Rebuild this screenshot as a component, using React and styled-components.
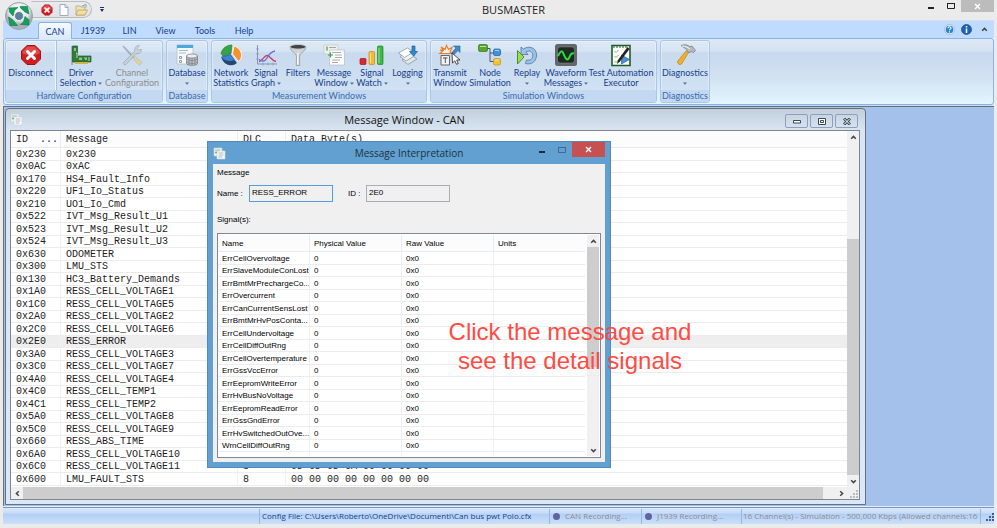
import React from "react";
import styled, { createGlobalStyle, css } from "styled-components";

const ui = `"Open Sans", "Noto Sans", sans-serif`;
const ribbonFont = `Lato, "Open Sans", sans-serif`;
const dialogFont = `"Liberation Sans", Arial, sans-serif`;
const mono = `"Liberation Mono", "Courier New", monospace`;

const GlobalStyle = createGlobalStyle`
  *, *::before, *::after { box-sizing: border-box; }
  body { margin: 0; background: #ebebeb; font-family: ${ui}; font-size: 8px; color: #000; }
  button { font: inherit; color: inherit; background: none; border: 0; padding: 0; margin: 0; }
  svg { display: block; flex: none; }
`;

const Page = styled.div`
  min-height: 100vh;
  display: flex;
  flex-direction: column;
  padding: 0 3px 4px;
  position: relative;
  overflow: hidden;
`;

/* ---------- title bar ---------- */
const TitleBar = styled.header`
  height: 20px;
  display: grid;
  grid-template-columns: 1fr auto 1fr;
  align-items: start;
`;
const AppTitle = styled.h1`
  margin: 0;
  padding-left: 30px;
  font-size: 11px;
  line-height: 20px;
  font-weight: 400;
  color: #222;
`;
const QuickArea = styled.div`
  display: flex;
  align-items: center;
  gap: 8px;
  padding: 1px 0 0 28px;
`;
const QuickBar = styled.div`
  height: 17px;
  width: 61px;
  padding-left: 9px;
  display: flex;
  align-items: center;
  gap: 6px;
  border: 1px solid #b9bcc1;
  border-left-color: transparent;
  border-radius: 0 9px 9px 0;
  background: linear-gradient(#e9ebee, #dfe2e6);
`;
const Orb = styled.button`
  position: absolute;
  z-index: 2;
  left: 4px;
  top: 1px;
`;
const WindowButtons = styled.div`
  display: flex;
  justify-content: flex-end;
`;
const WinButton = styled.button`
  width: ${(p) => (p.$close ? 33 : 20)}px;
  height: 12px;
  display: flex;
  align-items: center;
  justify-content: center;
  color: ${(p) => (p.$close ? "#fff" : "#222")};
  background: ${(p) => (p.$close ? "#bcbcbc" : "transparent")};
`;

/* ---------- ribbon ---------- */
const TabBar = styled.nav`
  height: 18px;
  background: #bfdbff;
  border-top: 1px solid #d5dfea;
  display: flex;
  align-items: stretch;
  padding-left: 35px;
  font-family: ${ribbonFont};
  font-size: 9px;
`;
const Tab = styled.button`
  width: ${(p) => p.$w}px;
  color: #15428b;
  line-height: 15px;
  margin-top: 1px;
  border: 1px solid transparent;
  border-bottom: 0;
  border-radius: 3px 3px 0 0;
  ${(p) =>
    p.$active &&
    css`
      border-color: #8db2e3;
      background: linear-gradient(#f5faff, #dbe8f7);
      margin-bottom: -1px;
      z-index: 1;
    `}
`;
const TabTools = styled.div`
  margin-left: auto;
  display: flex;
  align-items: center;
  gap: 6px;
  padding-right: 4px;
`;
const Ribbon = styled.section`
  height: 67px;
  border: 1px solid #8db2e3;
  border-radius: 3px;
  box-shadow: 0 1px 0 #bfdbff;
  background: linear-gradient(#dce8f5 0, #d5e2f2 12px, #c8d8ed 14px, #d3e3f3 40px, #e3f5ff 100%);
  display: flex;
  gap: 3px;
  padding: 1px;
  font-family: ${ribbonFont};
  font-size: 9px;
`;
const Group = styled.div`
  display: flex;
  flex-direction: column;
  height: 63px;
  border: 1px solid #a9c7e8;
  border-radius: 3px;
  box-shadow: inset 0 0 0 1px rgba(255, 255, 255, 0.35);
  overflow: hidden;
  background: linear-gradient(#dee9f6 0, #d6e4f3 10px, #c9daee 12px, #d4e4f5 100%);
`;
const GroupBody = styled.div`
  flex: 1;
  display: flex;
  padding-right: ${(p) => p.$pad || 0}px;
`;
const GroupLabel = styled.div`
  height: 12px;
  line-height: 11px;
  text-align: center;
  color: #3e6aaa;
  background: #c2d9f1;
`;
const RibbonButton = styled.button`
  width: ${(p) => p.$w}px;
  display: flex;
  flex-direction: column;
  align-items: center;
  padding-top: 3px;
  color: ${(p) => (p.$off ? "#8d8d8d" : "#15428b")};
  white-space: nowrap;
  ${(p) =>
    p.$divided &&
    css`
      border-right: 1px solid #eef5fc;
      box-shadow: 1px 0 0 #a9c2e0;
    `}
  svg.icon { width: 22px; height: 22px; margin-bottom: 2px; opacity: ${(p) => (p.$off ? 0.65 : 1)}; }
`;
const Line = styled.span`
  display: flex;
  align-items: center;
  justify-content: center;
  gap: 2px;
  height: 10px;
  line-height: 10px;
`;

/* ---------- MDI area ---------- */
const Desktop = styled.main`
  flex: 1;
  margin-top: 1px;
  border: solid #6c6f75;
  border-width: 1px 0 0 1px;
  background: #a3c1ea;
  padding: 1px 128px 1px 1px;
  position: relative;
`;
const ChildWindow = styled.section`
  border: 1px solid #66717f;
  border-radius: 4px 4px 0 0;
  background: linear-gradient(#c1cfdc 0, #d9e5f2 22px, #dbe7f4 100%);
  padding: 0 5px 4px 4px;
  display: flex;
  flex-direction: column;
`;
const ChildTitle = styled.div`
  height: 21px;
  display: grid;
  grid-template-columns: 14px 1fr 75px;
  align-items: center;
  h2 { margin: 0; font-size: 11px; line-height: 20px; font-weight: 400; text-align: center; color: #111; }
`;
const ChildButtons = styled.div`
  display: flex;
  gap: 2px;
  padding: 3px 0 0;
`;
const ChildButton = styled.button`
  width: 23px;
  height: 14px;
  border: 1px solid #8d9fbc;
  border-radius: 2px;
  display: flex;
  align-items: center;
  justify-content: center;
  color: #3b4656;
`;
const Sheet = styled.div`
  border: 1px solid #7d8794;
  background: #fff;
`;
const SheetMain = styled.div`
  display: flex;
`;
const TableClip = styled.div`
  flex: 1;
  min-width: 0;
  overflow: hidden;
  ${(p) => p.$h && css`height: ${p.$h}px;`}
`;
const DataTable = styled.table`
  width: 100%;
  table-layout: fixed;
  border-collapse: separate;
  border-spacing: 0;
  font-family: ${(p) => (p.$mono ? mono : dialogFont)};
  font-size: ${(p) => (p.$mono ? 10 : 8)}px;
  color: ${(p) => (p.$mono ? "#1c1c1c" : "#000")};
  th, td {
    padding: 0 0 0 ${(p) => (p.$mono ? 5 : 4)}px;
    text-align: left;
    font-weight: 400;
    white-space: pre;
    overflow: hidden;
    border-bottom: 1px solid #ececec;
    border-right: 1px solid #f0f0f2;
    line-height: 11px;
  }
  th { height: 17px; background: #fcfcfc; border-color: #e4ecf5; }
  td { height: 12px; }
  tbody tr:nth-child(odd) td { height: 13px; }
  th:last-child, td:last-child { border-right: 0; }
`;
const Row = styled.tr`
  background: ${(p) => (p.$selected ? "#eeeeee" : "transparent")};
`;
const VScroll = styled.div`
  width: 12px;
  display: flex;
  flex-direction: column;
  background: #f0f0f0;
  flex: none;
`;
const HScroll = styled.div`
  height: 12px;
  display: flex;
  background: #f0f0f0;
  align-items: stretch;
`;
const ScrollButton = styled.button`
  width: 12px;
  height: 12px;
  flex: none;
  display: flex;
  align-items: center;
  justify-content: center;
  color: #444;
`;
const Thumb = styled.div`
  flex: ${(p) => p.$size};
  background: #cdcdcd;
`;
const Gap = styled.div`
  flex: ${(p) => p.$size};
`;

/* ---------- dialog ---------- */
const Dialog = styled.section`
  position: absolute;
  left: 203px;
  top: 34px;
  width: 404px;
  background: #61a0d0;
  border: 1px solid #5289b8;
  padding: 0 5px 5px;
  font-family: ${dialogFont};
`;
const DialogTitle = styled.div`
  height: 22px;
  display: grid;
  grid-template-columns: 74px 1fr 74px;
  align-items: center;
  h2 { margin: 0; font-family: ${ui}; font-size: 10px; font-weight: 400; color: #1e3242; text-align: center; white-space: nowrap; }
`;
const DialogButtons = styled.div`
  display: flex;
  align-self: start;
  justify-content: flex-end;
`;
const DialogButton = styled.button`
  width: ${(p) => (p.$close ? 33 : 20)}px;
  height: 15px;
  display: flex;
  align-items: center;
  justify-content: center;
  color: ${(p) => (p.$close ? "#fff" : p.$dim ? "#3d6a8e" : "#1c2c3a")};
  background: ${(p) => (p.$close ? "#c75050" : "transparent")};
`;
const DialogBody = styled.div`
  background: #f0f0f0;
  padding: 4px;
`;
const Caption = styled.div`
  line-height: 10px;
  height: ${(p) => p.$h}px;
`;
const Fields = styled.div`
  display: flex;
  align-items: center;
  height: 18px;
  margin-bottom: 13px;
`;
const FieldLabel = styled.label`
  width: ${(p) => p.$w}px;
  padding-left: ${(p) => p.$pad || 0}px;
`;
const Field = styled.input`
  width: 84px;
  height: 17px;
  padding: 0 3px 2px 2px;
  font: 8px ${dialogFont};
  color: #000;
  background: #f0f0f0;
  border: 1px solid ${(p) => (p.$focus ? "#569de5" : "#abadb3")};
  border-radius: 0;
  outline: 0;
`;
const ListBox = styled.div`
  display: flex;
  gap: 2px;
  background: #fff;
  border: 1px solid #828790;
  padding: 1px 1px 1px 0;
`;
const Annotation = styled.p`
  position: absolute;
  left: 435px;
  top: 210px;
  width: 262px;
  margin: 0;
  text-align: center;
  font: 24px/29px ${dialogFont};
  color: #ff4b42;
`;

/* ---------- status bar ---------- */
const StatusBar = styled.footer`
  height: 17px;
  margin-top: 1px;
  border-top: 1px solid #7397cb;
  background: linear-gradient(#dbe9fb 0, #c7dcf8 5px, #b3cff5 6px, #c9dff9 100%);
  display: flex;
  align-items: center;
  justify-content: flex-end;
  line-height: 16px;
  white-space: nowrap;
`;
const StatusCell = styled.div`
  width: ${(p) => p.$w}px;
  display: flex;
  align-items: center;
  gap: 5px;
  padding-left: ${(p) => p.$pad || 2}px;
  height: 15px;
  overflow: hidden;
  border-left: 1px solid #98b8e2;
  color: ${(p) => (p.$strong ? "#15428b" : "#8d8d8d")};
`;
const Dot = styled.span`
  width: 7px;
  height: 7px;
  border-radius: 50%;
  background: #6163a0;
`;

/* ---------- small glyphs ---------- */
const Caret = () => (
  <svg width="4" height="3" viewBox="0 0 4 3"><path d="M0 0.5h4L2 2.8z" fill="#4a6fa8" /></svg>
);
const MinGlyph = () => <svg width="6" height="8" viewBox="0 0 6 8"><path d="M0 5h6v2H0z" fill="currentColor" /></svg>;
const MaxGlyph = () => <svg width="8" height="8" viewBox="0 0 8 8"><path d="M.5 1.5h7v5h-7z" fill="none" stroke="currentColor" /><path d="M0 1h8v1H0z" fill="currentColor" /></svg>;
const CloseGlyph = () => <svg width="7" height="7" viewBox="0 0 7 7"><path d="M1 1l5 5M6 1L1 6" stroke="currentColor" strokeWidth="1.4" /></svg>;
const Chevron = ({ turn }) => (
  <svg width="7" height="7" viewBox="0 0 7 7"><path transform={`rotate(${turn} 3.5 3.5)`} d="M1.2 4.8L3.5 2.4l2.3 2.4" fill="none" stroke="currentColor" strokeWidth="1.5" /></svg>
);
const PageIcon = () => (
  <svg width="13" height="13" viewBox="0 0 13 13">
    <path d="M1 1h8v8H1z" fill="#f2f4f2" stroke="#c9ccd0" strokeWidth=".7" />
    <path d="M4 4h8v8H4z" fill="#fff" stroke="#c3d3e6" strokeWidth=".7" />
    <path d="M2 3h5M5.5 6h5M5.5 8h5M5.5 10h4" stroke="#9aa3a6" strokeWidth=".8" />
    <circle cx="3" cy="5.5" r="1" fill="#5db85b" />
  </svg>
);
const Grip = ({ color }) => (
  <svg width="9" height="9" viewBox="0 0 9 9" fill={color}><path d="M7 1h2v2H7zM4 4h2v2H4zM7 4h2v2H7zM1 7h2v2H1zM4 7h2v2H4zM7 7h2v2H7z" /></svg>
);
const StopShape = () => (
  <>
    <path d="M7 1.5h8L20.500 7v8L15 20.500H7L1.500 15V7z" fill="#cf1d20" stroke="#a01216" />
    <path d="M7.500 2.500h7L19.500 7.500v2C14 12 8 11.500 2.500 9.500v-2z" fill="#ee6a66" opacity=".6" />
    <path d="M7.500 7.500l7 7M14.500 7.500l-7 7" stroke="#fff" strokeWidth="3" strokeLinecap="round" />
  </>
);
const SmallStop = () => <svg width="12" height="12" viewBox="0 0 22 22"><StopShape /></svg>;

const icons = {
  stop: <StopShape />,
  board: (
    <>
      <path d="M1 2h2v19H1z" fill="#a9b2ae" />
      <path d="M2.500 2h5v10h13.500v6H2.500z" fill="#2f7c3c" stroke="#1b5a2a" strokeWidth=".7" />
      <path d="M5 18h13v2H5z" fill="#d2b34a" />
      <path d="M4 4h2v3H4zM9 13.500h3v2.500H9zM15 13.500h2v2.500h-2z" fill="#8fc28a" />
      <path d="M6 9h1v5M14 14h1M19 13v4" stroke="#c9d99a" fill="none" />
    </>
  ),
  tools: (
    <>
      <path d="M1.500 2.500l1-1 11 11.500-1.500 1.500z" fill="#8b9196" />
      <path d="M12 14.500l2-2 7 6-2.500 3z" fill="#e6cf7b" stroke="#c0a65a" strokeWidth=".6" />
      <path d="M14 7c-1-3.500 1.500-6 4.500-5.500l-2.500 3 1 1.500 3.500-.5c0 3-3 5-5.500 4L5 20.500c-2 1-3.300-.8-2-2.500z" fill="#c5c9cd" stroke="#858b91" strokeWidth=".7" />
    </>
  ),
  database: (
    <>
      <path d="M1 1h16v19H1z" fill="#f5f9fc" stroke="#a8bccd" strokeWidth=".7" />
      <path d="M1 1h16v3H1z" fill="#49a8e0" />
      <path d="M3 6.500h9M3 9h7" stroke="#9bbcd6" />
      <path d="M3.500 12.500h2v2h-2zM3.500 16.500h2v2h-2z" fill="none" stroke="#777" strokeWidth=".7" />
      <path d="M10.500 12v7.500c0 2.500 11 2.500 11 0V12z" fill="#b9bdc1" stroke="#74797e" strokeWidth=".7" />
      <ellipse cx="16" cy="12" rx="5.500" ry="2" fill="#eceeef" stroke="#74797e" strokeWidth=".7" />
      <path d="M10.500 15c2 2 9 2 11 0M10.500 18c2 2 9 2 11 0M13 14v7M16 14v7M19 14v7" fill="none" stroke="#7d8286" strokeWidth=".7" />
    </>
  ),
  pie: (
    <>
      <path d="M1 9.500C2 5 6 1 12 1L11 9.500 3 12z" fill="#37a344" stroke="#1f7230" strokeWidth=".6" />
      <path d="M14 2c4 1 7.500 5 7.500 9 0 3-1 5-3 6.500L12.500 10z" fill="#f59331" stroke="#fff" strokeWidth=".8" />
      <path d="M1.500 13l9-2.500 6 8.500c-5 4-13 1.500-15-6z" fill="#3a84cf" stroke="#173f80" strokeWidth=".6" />
      <path d="M2 14c4 3 8 4 12 2l2.500 3C12 23 3.500 21 2 14z" fill="#27466f" />
    </>
  ),
  graph: (
    <>
      <path d="M2.500 1v19H22" fill="none" stroke="#8495b8" />
      <path d="M1 5h3M1 10h3M1 15h3M8 18.500v3M13 18.500v3M18 18.500v3" stroke="#8495b8" strokeWidth=".7" />
      <path d="M4 17.500c4-1 5-6 8-6s4 5 9 6" fill="none" stroke="#d0385b" strokeWidth="1.300" />
      <path d="M4 15.500c3 2 6 2.500 8-1.500s4-6 8-7" fill="none" stroke="#6a72cf" strokeWidth="1.300" />
    </>
  ),
  funnel: (
    <>
      <path d="M3 3c1 5 6 6 6.500 9l-.3 9.500h3.600L12.500 12c.5-3 5.500-4 6.500-9z" fill="#cfd2d5" stroke="#8d9195" strokeWidth=".7" />
      <path d="M10.200 10l-.2 10.500h1.500V7z" fill="#f8f9fa" />
      <ellipse cx="11" cy="2.800" rx="8" ry="2.300" fill="#3f4347" stroke="#c5c9cd" strokeWidth="1" />
    </>
  ),
  message: (
    <>
      <path d="M1 1h14v9H1z" fill="#eef0ed" stroke="#c5c9c5" strokeWidth=".7" />
      <path d="M6.500 6h15v15h-15z" fill="#fff" stroke="#b5bdc5" strokeWidth=".7" />
      <path d="M6 3.500h7M9 8.500h9M12 11h7M12 13.500h7M9 16h8M9 18.500h6" stroke="#8d9598" strokeWidth=".8" />
      <path d="M4 2.500v4M5 11h5M7.500 8.500v5" stroke="#37a344" strokeWidth="1.200" />
    </>
  ),
  bars: (
    <>
      <rect x="-1" y="14.500" width="6" height="6" rx="1" fill="#d62a2d" stroke="#a2171c" strokeWidth=".7" />
      <rect x="8" y="7.500" width="5.500" height="13" rx="1" fill="#f2bc2c" stroke="#c48d13" strokeWidth=".7" />
      <rect x="16.500" y="2" width="5.500" height="18.500" rx="1" fill="#3cb93f" stroke="#22852b" strokeWidth=".7" />
      <path d="M9.500 9v10M18 4v15" stroke="#fff" opacity=".5" />
    </>
  ),
  logging: (
    <>
      <path d="M5 16l9-5 6 4-9 5.500z" fill="#dfe6ec" stroke="#7f8d9a" strokeWidth=".7" />
      <path d="M3 12.500l9-5 6 4-9 5.500z" fill="#eef2f5" stroke="#7f8d9a" strokeWidth=".7" />
      <path d="M1.500 9l9-5 6 4-9 5.500z" fill="#fff" stroke="#7f8d9a" strokeWidth=".7" />
      <path d="M15 2h3v5.500h2.500L16.500 12l-4-4.500H15z" fill="#2f8ad0" stroke="#1c6099" strokeWidth=".7" />
    </>
  ),
  transmit: (
    <>
      <path d="M2 3l4 2.500 1.500-4 2 4 3.500-2-2 4.500 1 1.500H1l3-2.500-3-1h3z" fill="#fff3ea" stroke="#ea7d2a" strokeWidth="1.200" />
      <path d="M12.500 9l4.500-5-2.500-2H21v6.500l-2-2-4.500 4.500z" fill="#3d8dc9" stroke="#1d5b8f" strokeWidth=".6" />
      <path d="M2 11.500h8.500v9.500H2z" fill="#f3f3f3" stroke="#666" />
      <path d="M4 14h4.500M6.300 13.500V19" stroke="#555" />
      <path d="M13 9l.5 10 2.300-2.200 1.700 3.500 1.800-.8-1.600-3.500h3.300z" fill="#fff" stroke="#222" strokeWidth=".8" />
    </>
  ),
  nodes: (
    <>
      <path d="M8 4.500h3v13h4M11 9h4" fill="none" stroke="#3f5871" />
      <rect x="-.5" y=".5" width="9" height="7" rx="1.500" fill="#57a72b" stroke="#33751a" strokeWidth=".7" />
      <rect x="14.500" y="5" width="7" height="6.500" rx="1.500" fill="#3f92d8" stroke="#1f62a0" strokeWidth=".7" />
      <rect x="14.500" y="14.500" width="7" height="6.500" rx="1.500" fill="#f2c235" stroke="#c09213" strokeWidth=".7" />
      <path d="M1 2.500h6M16 6.500h4M16 16h4" stroke="#fff" opacity=".6" />
    </>
  ),
  replay: (
    <>
      <path d="M5 3l2.500 2C12 1.500 20.500 3 20.500 11c0 7-5.500 10-11 8.500l1-3.500c4 1 6.500-1.500 6.300-5-.3-4-4-5-7-3l2.200 2.500H5z" fill="#9cc3e4" stroke="#4677a4" strokeWidth=".8" />
      <path d="M1.500 6.500l6.500 6.500-6.500 7z" fill="#9bdc50" stroke="#4a8f26" />
    </>
  ),
  wave: (
    <>
      <rect x="0" y="0" width="22" height="22" rx="2.500" fill="#63666a" />
      <rect x="2.500" y="3" width="17" height="16" rx="3" fill="#1c2a20" stroke="#8a8e92" strokeWidth=".5" />
      <path d="M3 12c3-6 4-6 6-1s4 6 5.500 2 3-4 4.500-3.500" fill="none" stroke="#2be23c" strokeWidth="2" />
    </>
  ),
  test: (
    <>
      <path d="M2 1.500h18v20H2z" fill="#fdfdf5" stroke="#1f5b2a" strokeWidth="1.600" />
      <path d="M4 1v3M7 1v3M10 1v3M13 1v3M16 1v3" stroke="#1f5b2a" />
      <path d="M4.500 7l1.500 1.500L8.500 6M4.500 12l1.500 1.500L8.500 11M4.500 17l1.500 1.500L8.500 16" fill="none" stroke="#8aa890" strokeWidth="1" />
      <path d="M11.500 11l8 4.500-8 4.500z" fill="#4a8fd8" stroke="#1d5596" strokeWidth=".6" />
      <path d="M17.500 3L8 16l-1 4 3-2.500L19.500 5z" fill="#222" />
    </>
  ),
  hammer: (
    <>
      <path d="M12 7l2.500 1.500-7 11.500c-1.500 1.500-4.500-.5-4-2.500z" fill="#efb02c" stroke="#b97e16" strokeWidth=".7" />
      <path d="M7 1.500c4-1.500 7-.5 9 1.300l2-.8 3.500 4.500-2 2L17 7.500l-2 1.500-3-4z" fill="#b4babf" stroke="#777d82" strokeWidth=".8" />
      <path d="M8 2c3 0 5 1 8 3" stroke="#f7f8f9" fill="none" />
    </>
  ),
};
const Icon = ({ name }) => <svg className="icon" viewBox="0 0 22 22" overflow="visible">{icons[name]}</svg>;

const groups = [
  { label: "Hardware Configuration", pad: 4, items: [
    { icon: "stop", w: 50, lines: ["Disconnect"], divided: true },
    { icon: "board", w: 50, lines: ["Driver", "Selection"], menu: true },
    { icon: "tools", w: 52, lines: ["Channel", "Configuration"], off: true } ] },
  { label: "Database", items: [{ icon: "database", w: 40, lines: ["Database", ""], menu: true }] },
  { label: "Measurement Windows", pad: 1, items: [
    { icon: "pie", w: 38, lines: ["Network", "Statistics"] },
    { icon: "graph", w: 32, lines: ["Signal", "Graph"], menu: true },
    { icon: "funnel", w: 32, lines: ["Filters"] },
    { icon: "message", w: 40, lines: ["Message", "Window"], menu: true },
    { icon: "bars", w: 36, lines: ["Signal", "Watch"], menu: true },
    { icon: "logging", w: 35, lines: ["Logging", ""], menu: true } ] },
  { label: "Simulation Windows", pad: 3, items: [
    { icon: "transmit", w: 38, lines: ["Transmit", "Window"] },
    { icon: "nodes", w: 42, lines: ["Node", "Simulation"] },
    { icon: "replay", w: 32, lines: ["Replay", ""], menu: true },
    { icon: "wave", w: 46, lines: ["Waveform", "Messages"], menu: true },
    { icon: "test", w: 64, lines: ["Test Automation", "Executor"] } ] },
  { label: "Diagnostics", items: [{ icon: "hammer", w: 48, lines: ["Diagnostics", ""], menu: true }] },
];

const tabs = [["CAN", 34], ["J1939", 42], ["LIN", 31], ["View", 41], ["Tools", 38], ["Help", 40]];

const messages = [
  ["0x230", "0x230"], ["0x0AC", "0xAC"], ["0x170", "HS4_Fault_Info"], ["0x220", "UF1_Io_Status"],
  ["0x210", "UO1_Io_Cmd"], ["0x522", "IVT_Msg_Result_U1"], ["0x523", "IVT_Msg_Result_U2"],
  ["0x524", "IVT_Msg_Result_U3"], ["0x630", "ODOMETER"], ["0x300", "LMU_STS"],
  ["0x130", "HC3_Battery_Demands"], ["0x1A0", "RESS_CELL_VOLTAGE1"], ["0x1C0", "RESS_CELL_VOLTAGE5"],
  ["0x2A0", "RESS_CELL_VOLTAGE2"], ["0x2C0", "RESS_CELL_VOLTAGE6"], ["0x2E0", "RESS_ERROR"],
  ["0x3A0", "RESS_CELL_VOLTAGE3"], ["0x3C0", "RESS_CELL_VOLTAGE7"], ["0x4A0", "RESS_CELL_VOLTAGE4"],
  ["0x4C0", "RESS_CELL_TEMP1"], ["0x4C1", "RESS_CELL_TEMP2"], ["0x5A0", "RESS_CELL_VOLTAGE8"],
  ["0x5C0", "RESS_CELL_VOLTAGE9"], ["0x660", "RESS_ABS_TIME"], ["0x6A0", "RESS_CELL_VOLTAGE10"],
  ["0x6C0", "RESS_CELL_VOLTAGE11", "8", "0D CD 0D CA 00 00 00 00"],
  ["0x600", "LMU_FAULT_STS", "8", "00 00 00 00 00 00 00 00"],
];

const signals = [
  "ErrCellOvervoltage", "ErrSlaveModuleConLost", "ErrBmtMrPrechargeCo...", "ErrOvercurrent",
  "ErrCanCurrentSensLost", "ErrBmtMrHvPosConta...", "ErrCellUndervoltage", "ErrCellDiffOutRng",
  "ErrCellOvertemperature", "ErrGssVccError", "ErrEepromWriteError", "ErrHvBusNoVoltage",
  "ErrEepromReadError", "ErrGssGndError", "ErrHvSwitchedOutOve...", "WrnCellDiffOutRng", "WrnOvercurrent",
];

function TitleArea() {
  return (
    <TitleBar>
      <QuickArea>
        <QuickBar>
          <button aria-label="Disconnect"><SmallStop /></button>
          <button aria-label="New">
            <svg width="10" height="12" viewBox="0 0 10 12"><path d="M1 .5h5L9 3.500v8H1z" fill="#fff" stroke="#8c9bb0" strokeWidth=".8" /><path d="M6 .5v3h3" fill="none" stroke="#8c9bb0" strokeWidth=".8" /></svg>
          </button>
          <button aria-label="Open">
            <svg width="13" height="12" viewBox="0 0 13 12"><path d="M1 2h4l1 1h4v8H1z" fill="#efe3b4" stroke="#b8a97a" strokeWidth=".8" /><path d="M3 6h9.500L10 11H1z" fill="#f2dfa6" stroke="#bda566" strokeWidth=".8" /><path d="M7 2l4-1.500v3" fill="none" stroke="#8ca0b5" /></svg>
          </button>
        </QuickBar>
        <button aria-label="Customize quick access">
          <svg width="4" height="5" viewBox="0 0 4 5"><path d="M0 0h4v1H0zM0 2h4L2 5z" fill="#15326b" /></svg>
        </button>
      </QuickArea>
      <AppTitle>BUSMASTER</AppTitle>
      <WindowButtons>
        <WinButton aria-label="Minimize"><MinGlyph /></WinButton>
        <WinButton aria-label="Maximize"><MaxGlyph /></WinButton>
        <WinButton $close aria-label="Close"><CloseGlyph /></WinButton>
      </WindowButtons>
    </TitleBar>
  );
}

function RibbonArea() {
  return (
    <>
      <TabBar role="tablist">
        {tabs.map(([name, w], i) => (
          <Tab key={name} $w={w} $active={i === 0} role="tab" aria-selected={i === 0}>{name}</Tab>
        ))}
        <TabTools>
          <button aria-label="Help">
            <svg width="11" height="11" viewBox="0 0 11 11"><circle cx="5.500" cy="5.500" r="5" fill="#e9f0f6" stroke="#9db2c5" strokeWidth=".7" /><circle cx="5.500" cy="5.500" r="3.800" fill="#2b82cf" /><path d="M4 4.300c0-2 3-2 3-.1C7 5.200 5.500 5 5.500 6.300M5.500 7.200v1.200" fill="none" stroke="#fff" strokeWidth="1.100" /></svg>
          </button>
          <button aria-label="About">
            <svg width="11" height="11" viewBox="0 0 11 11"><circle cx="5.500" cy="5.500" r="5" fill="#1e62b4" stroke="#164a8a" strokeWidth=".7" /><path d="M5.500 2v1.500M5.500 4.500V9" stroke="#fff" strokeWidth="1.500" /></svg>
          </button>
          <ScrollButton aria-label="Collapse ribbon"><Chevron turn={0} /></ScrollButton>
        </TabTools>
      </TabBar>
      <Ribbon>
        {groups.map((g) => (
          <Group key={g.label}>
            <GroupBody $pad={g.pad}>
              {g.items.map((b) => (
                <RibbonButton key={b.icon} $w={b.w} $off={b.off} $divided={b.divided} disabled={b.off}>
                  <Icon name={b.icon} />
                  {b.lines.map((t, i) => (
                    <Line key={i}>{t}{b.menu && i === 1 && <Caret />}</Line>
                  ))}
                </RibbonButton>
              ))}
            </GroupBody>
            <GroupLabel>{g.label}</GroupLabel>
          </Group>
        ))}
      </Ribbon>
    </>
  );
}

function MessageWindow() {
  return (
    <ChildWindow aria-label="Message Window - CAN">
      <ChildTitle>
        <PageIcon />
        <h2>Message Window - CAN</h2>
        <ChildButtons>
          <ChildButton aria-label="Minimize window"><svg width="8" height="6" viewBox="0 0 8 6"><path d="M.5 2.500h7v2.500h-7z" fill="#fff" stroke="currentColor" /></svg></ChildButton>
          <ChildButton aria-label="Restore window"><svg width="8" height="7" viewBox="0 0 8 7"><path d="M.5.5h7v6h-7zM2.500 2.500h3v2h-3z" fill="#fff" stroke="currentColor" /></svg></ChildButton>
          <ChildButton aria-label="Close window"><svg width="8" height="7" viewBox="0 0 8 7"><path d="M1 .5l6 6M7 .5l-6 6" stroke="currentColor" strokeWidth="2.800" /><path d="M1.300 .8l5.400 5.400M6.700 .8L1.300 6.200" stroke="#fff" /></svg></ChildButton>
        </ChildButtons>
      </ChildTitle>
      <Sheet>
        <SheetMain>
          <TableClip $h={356}>
            <DataTable $mono>
              <colgroup><col width="50" /><col width="177" /><col width="48" /><col /></colgroup>
              <thead><tr><th>ID  ...</th><th>Message</th><th>DLC</th><th>Data Byte(s)</th></tr></thead>
              <tbody>
                {messages.map(([id, name, dlc, data]) => (
                  <Row key={id} $selected={id === "0x2E0"}><td>{id}</td><td>{name}</td><td>{dlc}</td><td>{data}</td></Row>
                ))}
              </tbody>
            </DataTable>
          </TableClip>
          <VScroll>
            <ScrollButton aria-label="Scroll up"><Chevron turn={0} /></ScrollButton>
            <Gap $size={96} />
            <Thumb $size={236} />
            <ScrollButton aria-label="Scroll down"><Chevron turn={180} /></ScrollButton>
          </VScroll>
        </SheetMain>
        <HScroll>
          <ScrollButton aria-label="Scroll left"><Chevron turn={270} /></ScrollButton>
          <Thumb $size={800} />
          <Gap $size={12} />
          <ScrollButton aria-label="Scroll right"><Chevron turn={90} /></ScrollButton>
          <ScrollButton as="span"><Grip color="#bdbdbd" /></ScrollButton>
        </HScroll>
      </Sheet>
    </ChildWindow>
  );
}

function InterpretationDialog() {
  return (
    <Dialog role="dialog" aria-label="Message Interpretation">
      <DialogTitle>
        <PageIcon />
        <h2>Message Interpretation</h2>
        <DialogButtons>
          <DialogButton aria-label="Minimize dialog"><MinGlyph /></DialogButton>
          <DialogButton $dim aria-label="Maximize dialog"><MaxGlyph /></DialogButton>
          <DialogButton $close aria-label="Close dialog"><CloseGlyph /></DialogButton>
        </DialogButtons>
      </DialogTitle>
      <DialogBody>
        <Caption $h={16}>Message</Caption>
        <Fields>
          <FieldLabel $w={32} htmlFor="msg-name">Name :</FieldLabel>
          <Field id="msg-name" $focus readOnly value="RESS_ERROR" />
          <FieldLabel $w={33} $pad={15} htmlFor="msg-id">ID :</FieldLabel>
          <Field id="msg-id" readOnly value="2E0" />
        </Fields>
        <Caption $h={18}>Signal(s):</Caption>
        <ListBox>
          <TableClip $h={221}>
            <DataTable>
              <colgroup><col width="92" /><col width="92" /><col width="92" /><col /></colgroup>
              <thead><tr><th>Name</th><th>Physical Value</th><th>Raw Value</th><th>Units</th></tr></thead>
              <tbody>
                {signals.map((s) => <Row key={s}><td>{s}</td><td>0</td><td>0x0</td><td></td></Row>)}
              </tbody>
            </DataTable>
          </TableClip>
          <VScroll>
            <ScrollButton aria-label="Scroll list up"><Chevron turn={0} /></ScrollButton>
            <Thumb $size={120} />
            <Gap $size={77} />
            <ScrollButton aria-label="Scroll list down"><Chevron turn={180} /></ScrollButton>
          </VScroll>
        </ListBox>
      </DialogBody>
    </Dialog>
  );
}

export default function App() {
  return (
    <Page>
      <GlobalStyle />
      <Orb aria-label="Application menu">
        <svg width="30" height="30" viewBox="0 0 30 30">
          <defs><radialGradient id="orb" cy=".3"><stop offset="0" stopColor="#fff" /><stop offset=".75" stopColor="#e3e7eb" /><stop offset="1" stopColor="#a9b0b8" /></radialGradient></defs>
          <circle cx="15" cy="15" r="13.500" fill="url(#orb)" stroke="#9aa1aa" />
          <path d="M5 7l9-.5-3.500 3L9 15 5.500 11zM23.500 5.500L25 13l-4-2-4-3.500-1-2zM25 24l-8.500-.5 3-2.500 1.500-5.500L25 19zM6 24.500L4.500 16l4 2.500 3 3.500 2 2.500z" fill="#12a05a" stroke="#0d7a43" strokeWidth=".6" />
          <circle cx="15" cy="15" r="4.500" fill="#5b7f99" stroke="#e7edf2" />
        </svg>
      </Orb>
      <TitleArea />
      <RibbonArea />
      <Desktop>
        <MessageWindow />
        <InterpretationDialog />
        <Annotation>Click the message and<br />see the detail signals</Annotation>
      </Desktop>
      <StatusBar>
        <StatusCell $w={290} $strong>Config File: C:\Users\Roberto\OneDrive\Documenti\Can bus pwt Polo.cfx</StatusCell>
        <StatusCell $w={92} $pad={3}><Dot />CAN Recording...</StatusCell>
        <StatusCell $w={100} $pad={3}><Dot />J1939 Recording...</StatusCell>
        <StatusCell $w={239} $pad={1}>16 Channel(s) - Simulation - 500,000 Kbps (Allowed channels:16</StatusCell>
        <StatusCell $w={14} $pad={4}><Grip color="#3e5f96" /></StatusCell>
      </StatusBar>
    </Page>
  );
}
